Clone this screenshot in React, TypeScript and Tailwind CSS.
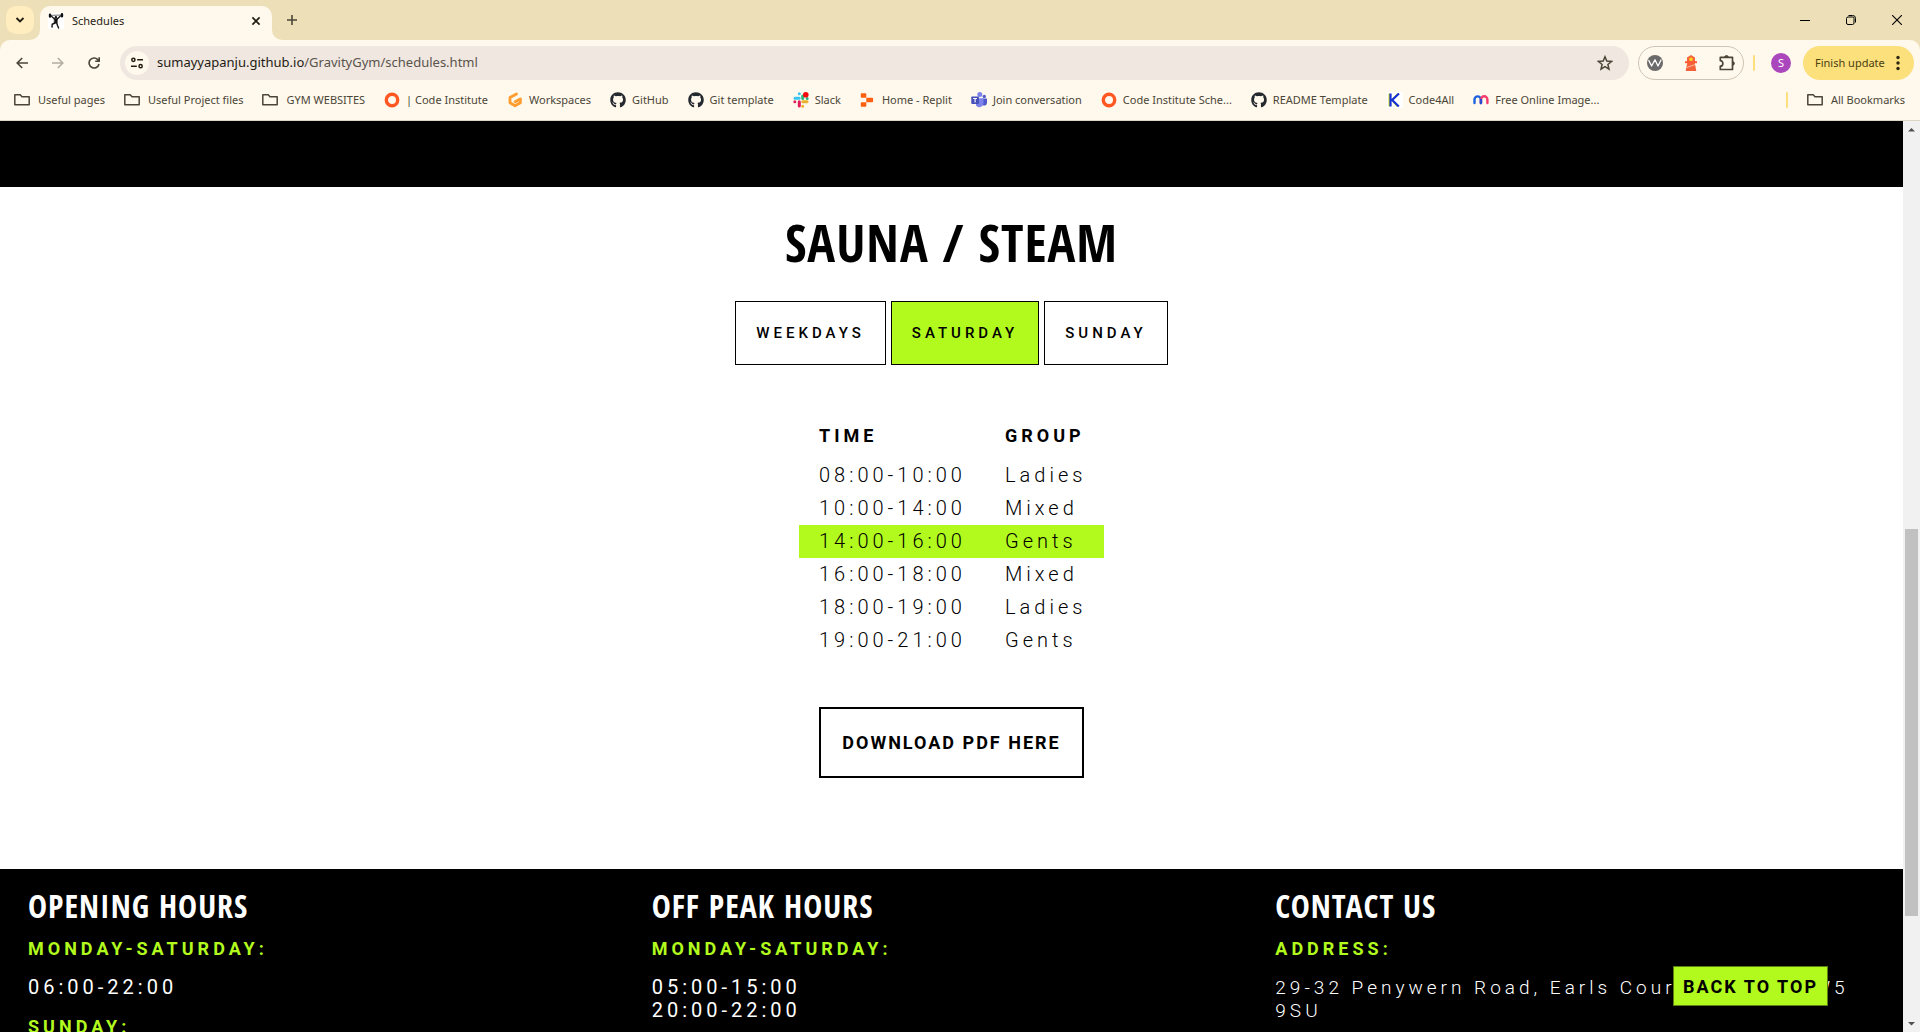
import type { ReactNode } from "react";
import { FaGithub } from "react-icons/fa";

const heading = "font-['Open_Sans_Condensed','Roboto_Condensed',sans-serif] font-bold";

function FolderIcon() {
  return (
    <svg className="h-4 w-4 shrink-0" viewBox="0 0 16 16" fill="none" stroke="#4b4637" strokeWidth="1.5" strokeLinejoin="round">
      <path d="M0.8 3.2v9.6h14.4V4.8H8L6.2 2.8H0.8z" />
    </svg>
  );
}

function RingIcon() {
  return (
    <svg className="h-4 w-4 shrink-0" viewBox="0 0 16 16" fill="none">
      <circle cx="8" cy="8" r="5.7" stroke="#ff5722" strokeWidth="3.4" />
    </svg>
  );
}

function GitpodIcon() {
  return (
    <svg className="h-4 w-4 shrink-0" viewBox="0 0 16 16" fill="none" stroke="#ff9c2e" strokeWidth="2.8" strokeLinecap="round" strokeLinejoin="round">
      <path d="M9.5 2 3 5.4v5.4l5 3 5.4-3V7L8.2 9.8" />
    </svg>
  );
}

function SlackIcon() {
  return (
    <svg className="h-4 w-4 shrink-0" viewBox="0 0 16 16" strokeWidth="3" strokeLinecap="round">
      <path d="M6.3 1.8v0M2 6.3h4.2" stroke="#36c5f0" />
      <path d="M9.7 4v2.4M14.2 6.4v0" stroke="#2eb67d" />
      <path d="M9.8 9.7H14M9.7 14.2v0" stroke="#ecb22e" />
      <path d="M6.3 9.8V14M1.8 9.7v0" stroke="#e01e5a" />
      <circle cx="12.8" cy="2.8" r="2.8" fill="#f40b0b" />
    </svg>
  );
}

function ReplitIcon() {
  return (
    <svg className="h-4 w-4 shrink-0" viewBox="0 0 16 16" fill="#fa6011">
      <path d="M1.600 1.300h3.900c.5 0 .8.4.8.800v3.600H1.600c-.5 0-.8-.3-.8-.8V2.100c0-.4.3-.8.800-.8zM6.300 5.700h6c.5 0 .8.4.8.800v3c0 .5-.3.800-.8.800h-6zM1.600 10.300h4.700v3.600c0 .5-.3.800-.8.800H1.600c-.5 0-.8-.3-.8-.8v-2.800c0-.5.3-.8.800-.8z" />
    </svg>
  );
}

function TeamsIcon() {
  return (
    <svg className="h-4 w-4 shrink-0" viewBox="0 0 16 16">
      <circle cx="13.3" cy="4.4" r="1.7" fill="#5059c9" />
      <circle cx="8.8" cy="2.6" r="2.5" fill="#7b83eb" />
      <path d="M11.5 6.5H16v4.6a2.6 2.6 0 0 1-4.5 1.6z" fill="#5059c9" />
      <path d="M5 6.2h7.5v5.3a4.2 4.2 0 0 1-7.5 2z" fill="#7b83eb" />
      <rect x="0.3" y="4.4" width="7.6" height="7.6" rx="0.8" fill="#464eb8" />
      <path d="M2.2 6.5H6M4.1 6.5v4" stroke="#fff" strokeWidth="1.1" />
    </svg>
  );
}

function KIcon() {
  return (
    <svg className="h-4 w-4 shrink-0" viewBox="0 0 16 16" fill="none">
      <rect width="16" height="16" fill="#fff" />
      <path d="M2.2 1.5v13M11 1.5 4.5 8l6 6.5" stroke="#d8df2b" strokeWidth="1.6" />
      <path d="M3.5 1.5v13M12 1.5 5.2 8l6.6 6.5" stroke="#1430d8" strokeWidth="2.2" />
    </svg>
  );
}

function MIcon() {
  return (
    <svg className="h-4 w-4 shrink-0" viewBox="0 0 16 16" fill="none" strokeWidth="2.4" strokeLinecap="round">
      <path d="M1.5 11V7.500a3 3 0 0 1 6.300 0V11" stroke="#1d63e0" />
      <path d="M8 11V7.500a3 3 0 0 1 6.400 0V11" stroke="#f23a6d" />
      <path d="M8 11V8" stroke="#2a4bd0" />
    </svg>
  );
}

function LifterIcon() {
  return (
    <svg className="h-4 w-4 shrink-0" viewBox="0 0 16 16" fill="none" stroke="#111" strokeLinecap="round">
      <rect width="16" height="16" fill="#fff" stroke="none" />
      <path d="M2 2.400 14 2" strokeWidth="0.6" />
      <path d="M2 1.600v2M14 1.300v2" strokeWidth="2.400" />
      <path d="M3.400 3.200 6.600 6M12.400 3 9.300 6" strokeWidth="1.200" />
      <circle cx="7.900" cy="4.200" r="1.200" fill="#111" stroke="none" />
      <path d="M6.600 5.800h2.700L9 10H6.700z" fill="#111" strokeWidth="0.8" />
      <path d="M7 10 4.200 11.300l-.2 2.800M8.800 10l.6 2.300 1.200 2.700" strokeWidth="1.400" />
    </svg>
  );
}

type Bookmark = { label: string; icon?: ReactNode };

const github = <FaGithub className="h-4 w-4 shrink-0 text-[#24292f]" />;

const bookmarks: Bookmark[] = [
  { label: "Useful pages" },
  { label: "Useful Project files" },
  { label: "GYM WEBSITES" },
  { label: "| Code Institute", icon: <RingIcon /> },
  { label: "Workspaces", icon: <GitpodIcon /> },
  { label: "GitHub", icon: github },
  { label: "Git template", icon: github },
  { label: "Slack", icon: <SlackIcon /> },
  { label: "Home - Replit", icon: <ReplitIcon /> },
  { label: "Join conversation", icon: <TeamsIcon /> },
  { label: "Code Institute Sche...", icon: <RingIcon /> },
  { label: "README Template", icon: github },
  { label: "Code4All", icon: <KIcon /> },
  { label: "Free Online Image...", icon: <MIcon /> },
];

function TabStrip() {
  return (
    <div className="flex h-10 items-end">
      <button aria-label="Search tabs" className="mb-1.5 ml-1.5 flex h-7 w-7 items-center justify-center rounded-[10px] bg-[#ffedc0]">
        <svg className="h-2.5 w-2.5" viewBox="0 0 10 10" fill="none" stroke="#1f1c10" strokeWidth="1.8">
          <path d="M1.5 3 5 6.5 8.5 3" />
        </svg>
      </button>
      <div className="relative ml-1.5 flex h-[34px] w-[232px] items-center rounded-t-[10px] bg-[#fff8ec] pr-2 pb-1 pl-2">
        <svg className="absolute bottom-0 -left-2.5 h-2.5 w-2.5" viewBox="0 0 10 10" fill="#fff8ec">
          <path d="M10 0v10H0A10 10 0 0 0 10 0z" />
        </svg>
        <svg className="absolute -right-2.5 bottom-0 h-2.5 w-2.5" viewBox="0 0 10 10" fill="#fff8ec">
          <path d="M0 0v10h10A10 10 0 0 1 0 0z" />
        </svg>
        <LifterIcon />
        <span className="ml-2 flex-1 text-[11px] text-[#1f1c13]">Schedules</span>
        <button aria-label="Close tab" className="flex h-4 w-4 items-center justify-center">
          <svg className="h-2.5 w-2.5" viewBox="0 0 10 10" stroke="#1f1c10" strokeWidth="1.6">
            <path d="M1.4 1.4 8.6 8.6M8.6 1.4 1.4 8.6" />
          </svg>
        </button>
      </div>
      <button aria-label="New tab" className="mb-3 ml-3 flex h-4 w-4 items-center justify-center">
        <svg className="h-2.5 w-2.5" viewBox="0 0 10 10" stroke="#4b4637" strokeWidth="1.6">
          <path d="M5 0v10M0 5h10" />
        </svg>
      </button>
      <div className="mr-[18px] mb-[15px] ml-auto flex items-center gap-9 text-black">
        <button aria-label="Minimize">
          <svg className="h-2.5 w-2.5" viewBox="0 0 10 10" stroke="currentColor">
            <path d="M0 5.5h10" />
          </svg>
        </button>
        <button aria-label="Restore">
          <svg className="h-2.5 w-2.5" viewBox="0 0 10 10" fill="none" stroke="currentColor">
            <rect x="0.5" y="2" width="7.5" height="7.5" rx="1.5" />
            <path d="M2.5.5h4.2A2.8 2.8 0 0 1 9.5 3.3v4.2" />
          </svg>
        </button>
        <button aria-label="Close window">
          <svg className="h-2.5 w-2.5" viewBox="0 0 10 10" stroke="currentColor" strokeWidth="1.1">
            <path d="M0 0 10 10M10 0 0 10" />
          </svg>
        </button>
      </div>
    </div>
  );
}

function Toolbar() {
  return (
    <div className="flex h-[46px] items-center rounded-t-[10px] bg-[#fff8ec] pr-1.5 pl-4">
      <button aria-label="Back">
        <svg className="h-3 w-3" viewBox="0 0 12 12" fill="none" stroke="#4b4637" strokeWidth="1.6">
          <path d="M12 6H1.2M6.2 1 1.2 6l5 5" />
        </svg>
      </button>
      <button aria-label="Forward" className="ml-6">
        <svg className="h-3 w-3" viewBox="0 0 12 12" fill="none" stroke="#b3ad9f" strokeWidth="1.6">
          <path d="M0 6h10.8M5.8 1l5 5-5 5" />
        </svg>
      </button>
      <button aria-label="Reload" className="ml-6">
        <svg className="h-3 w-3" viewBox="0 0 12 12" fill="none" stroke="#4b4637" strokeWidth="1.6">
          <path d="M11 7A5 5 0 1 1 9.8 2.6L11 3.9M11.2.2v4H7.2" />
        </svg>
      </button>
      <div className="ml-5 flex h-[34px] flex-1 items-center rounded-full bg-[#efe7e0] pr-4 pl-[5px]">
        <button aria-label="Site information" className="flex h-6 w-6 items-center justify-center rounded-full bg-[#fff8ec]">
          <svg className="h-3 w-3" viewBox="0 0 12 12" fill="none" stroke="#1f1c13" strokeWidth="1.5">
            <circle cx="2.4" cy="2.8" r="1.6" />
            <path d="M6.2 2.8H12M0 9.2h5.8" />
            <circle cx="9.6" cy="9.2" r="1.6" />
          </svg>
        </button>
        <a href="#address" className="ml-2 flex-1 text-[13px] text-[#5a544c]">
          <span className="text-[#1f1b13]">sumayyapanju.github.io</span>/GravityGym/schedules.html
        </a>
        <button aria-label="Bookmark this page">
          <svg className="h-4 w-4" viewBox="0 0 16 16" fill="none" stroke="#4b4637" strokeWidth="1.5">
            <path d="m8 1.8 1.8 4.3 4.7.4-3.6 3 1.1 4.6L8 11.7l-4 2.4 1.1-4.6-3.6-3 4.7-.4z" />
          </svg>
        </button>
      </div>
      <div className="ml-[9px] flex h-[34px] w-[106px] items-center justify-between rounded-full border border-[#cfc5b6] px-2">
        <svg className="h-4 w-4" viewBox="0 0 16 16" fill="none" strokeLinecap="round" strokeLinejoin="round">
          <circle cx="8" cy="8" r="8" fill="#6b6b6b" />
          <path d="M1.800 5.500 4.600 11 8 4.800 11 11l3-6" stroke="#fff" strokeWidth="1.300" />
        </svg>
        <svg className="h-4 w-4" viewBox="0 0 16 16">
          <path d="M8 0l4 2.600v4.400H4V2.600zM4.200 8h7.600l1.500 8H2.700z" fill="#f4623a" />
          <path d="M2 6.200h12v2H2z" fill="#ff5a36" />
          <rect x="6.200" y="2.500" width="3.600" height="3.600" rx="1.500" fill="#ffd21f" />
          <path d="M3.600 12.500 12 9.600" stroke="#ffb9a0" strokeWidth="1" />
        </svg>
        <button aria-label="Extensions">
          <svg className="h-4 w-4" viewBox="0 0 16 16" fill="none" stroke="#4b4637" strokeWidth="1.700" strokeLinejoin="round">
            <path d="M1.300 2.300h12.200v12.200H1.300v-3.300c3.400 0 3.400-5.600 0-5.600z" />
            <path d="M5.600 2.300a1.900 1.900 0 0 1 3.800 0M13.500 6.500a1.900 1.900 0 0 1 0 3.800z" fill="#4b4637" strokeWidth="0.800" />
          </svg>
        </button>
      </div>
      <div className="ml-[9px] h-4 w-0.5 rounded bg-[#fce07c]" />
      <button aria-label="Profile" className="ml-4 flex h-5 w-5 items-center justify-center rounded-full bg-[#ab47bc] text-[11px] text-white">
        S
      </button>
      <button className="ml-3 flex h-[34px] w-[111px] items-center justify-between rounded-full bg-[#fce07c] pr-3.5 pl-3 text-[11px] text-[#4a3f10]">
        Finish update
        <svg className="h-4 w-1" viewBox="0 0 4 16" fill="#2c2710">
          <circle cx="2" cy="2.500" r="1.700" />
          <circle cx="2" cy="8" r="1.700" />
          <circle cx="2" cy="13.500" r="1.700" />
        </svg>
      </button>
    </div>
  );
}

function BookmarksBar() {
  return (
    <nav aria-label="Bookmarks" className="flex h-[35px] items-center gap-[19px] border-b border-[#ded6c4] bg-[#fff8ec] pr-[15px] pb-1.5 pl-3.5 text-[11px] whitespace-nowrap text-[#4b4637]">
      {bookmarks.map((b) => (
        <a key={b.label} href="#bookmark" className={`flex items-center ${b.icon ? "gap-1.5" : "gap-2"}`}>
          {b.icon ?? <FolderIcon />}
          {b.label}
        </a>
      ))}
      <div className="ml-auto h-4 w-0.5 rounded bg-[#fce07c]" />
      <a href="#all" className="flex items-center gap-2">
        <FolderIcon />
        All Bookmarks
      </a>
    </nav>
  );
}

const days = ["WEEKDAYS", "SATURDAY", "SUNDAY"];

const slots = [
  ["08:00-10:00", "Ladies"],
  ["10:00-14:00", "Mixed"],
  ["14:00-16:00", "Gents"],
  ["16:00-18:00", "Mixed"],
  ["18:00-19:00", "Ladies"],
  ["19:00-21:00", "Gents"],
];

function Schedule() {
  return (
    <section className="flex flex-col items-center bg-white pb-[91px] text-black">
      <h1 className={`${heading} mt-[18px] text-[52px] leading-[74px] tracking-[1px]`}>SAUNA / STEAM</h1>
      <div className="mt-[22px] flex gap-[5px]">
        {days.map((d) => (
          <button
            key={d}
            className={`h-16 border border-black px-5 text-[15px] font-medium tracking-[4px] ${d === "SATURDAY" ? "bg-[#b2fa1e]" : "bg-white"}`}
          >
            {d}
          </button>
        ))}
      </div>
      <table className="mt-[47px] w-[305px] table-fixed text-left text-[20px] leading-[33px] tracking-[4px]">
        <thead>
          <tr className="h-[47px] align-middle text-[18px]">
            <th className="w-[206px] pl-5 font-bold">TIME</th>
            <th className="font-bold">GROUP</th>
          </tr>
        </thead>
        <tbody>
          {slots.map(([time, group]) => (
            <tr key={time} className={time === "14:00-16:00" ? "bg-[#b2fa1e]" : ""}>
              <td className="pl-5 font-light">{time}</td>
              <td className="font-light">{group}</td>
            </tr>
          ))}
        </tbody>
      </table>
      <button className="mt-[50px] h-[71px] border-2 border-black px-[21px] text-[18px] font-bold tracking-[2px]">DOWNLOAD PDF HERE</button>
    </section>
  );
}

type Column = { title: string; label: string; hours?: string[]; address?: string; next?: string };

const columns: Column[] = [
  { title: "OPENING HOURS", label: "MONDAY-SATURDAY:", hours: ["06:00-22:00"], next: "SUNDAY:" },
  { title: "OFF PEAK HOURS", label: "MONDAY-SATURDAY:", hours: ["05:00-15:00", "20:00-22:00"] },
  { title: "CONTACT US", label: "ADDRESS:", address: "29-32 Penywern Road, Earls Court, London SW5 9SU" },
];

function Footer() {
  return (
    <footer className="grid flex-1 grid-cols-3 bg-black px-4 pt-[15px] text-white">
      {columns.map((c) => (
        <div key={c.title} className="px-3">
          <h2 className={`${heading} text-[32px] leading-[44px] tracking-[1px]`}>{c.title}</h2>
          <h3 className="mt-[9px] text-[18px] leading-6 font-bold tracking-[4px] text-[#b2fa1e]">{c.label}</h3>
          <div className="mt-[15px] text-[20px] leading-[23px] tracking-[4px]">
            {c.hours?.map((h) => (
              <p key={h}>{h}</p>
            ))}
            {c.address && <address className="text-[19px] font-light not-italic">{c.address}</address>}
          </div>
          {c.next && <h3 className="mt-4 text-[18px] leading-6 font-bold tracking-[4px] text-[#b2fa1e]">{c.next}</h3>}
        </div>
      ))}
    </footer>
  );
}

function ScrollBar() {
  return (
    <div className="flex w-[17px] shrink-0 flex-col items-center bg-[#f1f1f1]">
      <svg className="h-[17px] w-[17px]" viewBox="0 0 17 17" fill="#505050">
        <path d="M5 10.500h7L8.500 7z" />
      </svg>
      <div className="flex-[391]" />
      <div className="w-[13px] flex-[387] bg-[#c1c1c1]" />
      <div className="flex-[99]" />
      <svg className="h-[17px] w-[17px]" viewBox="0 0 17 17" fill="#505050">
        <path d="M5 7h7l-3.500 3.500z" />
      </svg>
    </div>
  );
}

export default function App() {
  return (
    <div className="flex h-screen flex-col overflow-hidden font-['Noto_Sans',sans-serif]">
      <header className="bg-[#ede0b9]">
        <TabStrip />
        <Toolbar />
        <BookmarksBar />
      </header>
      <div className="flex min-h-0 flex-1">
        <main className="relative flex flex-1 flex-col overflow-hidden bg-white font-[Roboto,sans-serif]">
          <div className="h-[66px] shrink-0 bg-black" />
          <Schedule />
          <Footer />
          <button className="absolute right-[75px] bottom-[26px] h-10 border border-[#5d8014] bg-[#b2fa1e] px-[9px] text-[18px] font-bold tracking-[2px] text-black">
            BACK TO TOP
          </button>
        </main>
        <ScrollBar />
      </div>
    </div>
  );
}
